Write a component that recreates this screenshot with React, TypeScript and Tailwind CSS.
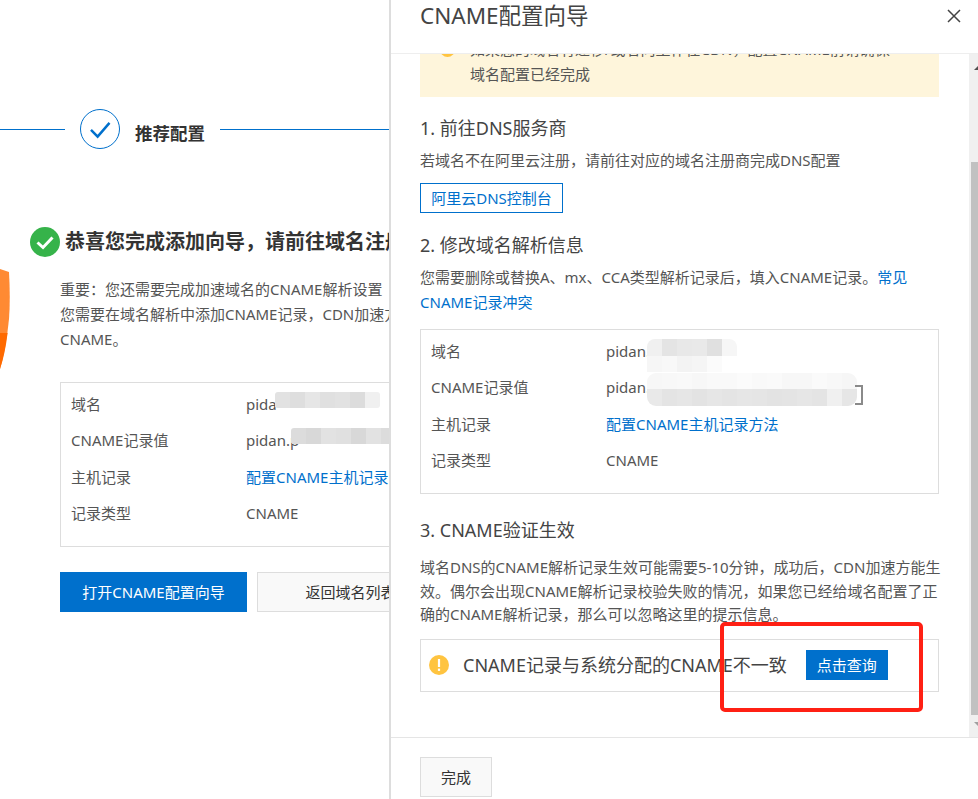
import React from "react";

const FONT = "font-['Noto_Sans','Noto_Sans_CJK_SC',sans-serif]";

function Cells({ cells, h = "h-[16px]" }: { cells: string[]; h?: string }) {
  return (
    <div className={`flex ${h}`}>
      {cells.map((c, i) => (
        <div key={i} className={`w-[15px] ${c}`} />
      ))}
    </div>
  );
}

function InfoRow({ label, children }: { label: string; children: React.ReactNode }) {
  return (
    <div className="relative flex h-[36.4px] items-center text-[15px] text-[#555]">
      <div className="w-[175px] shrink-0">{label}</div>
      <div className="relative whitespace-nowrap">{children}</div>
    </div>
  );
}

function Check({ className }: { className: string }) {
  return (
    <svg viewBox="0 0 40 40" className={className}>
      <path d="M10.5 21 L17.5 28 L30 13.5" fill="none" stroke="currentColor" strokeWidth="2.6" />
    </svg>
  );
}

function Left() {
  return (
    <div className="relative h-full w-[389px] shrink-0 overflow-hidden">
      <svg viewBox="0 0 12 102" className="absolute left-0 top-[269px] h-[102px] w-[12px]">
        <path d="M0 0 L9 3 Q10.5 30 9 50 Q6 80 0 100 Z" fill="#ff8a33" />
        <path d="M0 64 L7.6 64 Q5 85 0 100 Z" fill="#ff6a00" />
      </svg>
      <div className="mt-[109px] flex h-[40px] w-[389px] items-center">
        <div className="h-px w-[65px] bg-[#0070cc]" />
        <div className="ml-[15px] flex h-[40px] w-[40px] items-center justify-center rounded-full border border-[#0070cc] text-[#0070cc]">
          <Check className="h-[38px] w-[38px]" />
        </div>
        <div className="ml-[15px] mt-[8px] w-[85px] text-[17.5px] font-bold text-[#333]">推荐配置</div>
        <div className="h-px flex-1 bg-[#0070cc]" />
      </div>
      <div className="ml-[30px] mt-[78px] flex h-[30px] w-[700px] items-center">
        <svg viewBox="0 0 30 30" className="h-[30px] w-[30px] shrink-0">
          <circle cx="15" cy="15" r="15" fill="#36b34a" />
          <path d="M7.5 15.5 L13 20.5 L22.5 10.5" fill="none" stroke="#fff" strokeWidth="3" />
        </svg>
        <div className="ml-[5px] whitespace-nowrap text-[20px] font-bold text-[#333]">恭喜您完成添加向导，请前往域名注册商处完成解析</div>
      </div>
      <div className="ml-[60px] mt-[20px] w-[600px] text-[15px] leading-[25px] text-[#555]">
        <div className="whitespace-nowrap">重要：您还需要完成加速域名的CNAME解析设置</div>
        <div className="whitespace-nowrap">您需要在域名解析中添加CNAME记录，CDN加速方可生效，请确保域名解析到</div>
        <div>CNAME。</div>
      </div>
      <div className="ml-[60px] mt-[30px] h-[165px] w-[700px] border border-[#ddd] pl-[10px] pt-[3px]">
        <InfoRow label="域名">
          pida
          <div className="absolute left-[29px] top-[-1px] overflow-hidden rounded-[3px] bg-white">
            <Cells cells={["bg-[#e2e2e2]", "bg-[#dedede]", "bg-[#e6e6e6]", "bg-[#e0e0e0]", "bg-[#e2e2e2]", "bg-[#dcdcdc]", "bg-[#f0f0f0]"]} />
          </div>
        </InfoRow>
        <InfoRow label="CNAME记录值">
          pidan.p
          <div className="absolute left-[45px] top-[-1px] overflow-hidden rounded-[3px] bg-white">
            <Cells cells={["bg-[#dcdcdc]", "bg-[#d8d8d8]", "bg-[#e2e2e2]", "bg-[#e0e0e0]", "bg-[#d8d8d8]", "bg-[#e2e2e2]", "bg-[#dcdcdc]"]} />
          </div>
        </InfoRow>
        <InfoRow label="主机记录">
          <span className="text-[#0070cc]">配置CNAME主机记录方法</span>
        </InfoRow>
        <InfoRow label="记录类型">CNAME</InfoRow>
      </div>
      <div className="ml-[60px] mt-[25px] flex w-[700px] gap-[10px] text-[15px]">
        <div className="flex h-[40px] w-[187px] items-center justify-center bg-[#0070cc] text-white">打开CNAME配置向导</div>
        <div className="flex h-[40px] w-[187px] items-center justify-center border border-[#ddd] bg-[#f9f9f9] text-[#333]">返回域名列表</div>
      </div>
    </div>
  );
}

function Warn({ className }: { className: string }) {
  return (
    <svg viewBox="0 0 20 20" className={className}>
      <circle cx="10" cy="10" r="10" fill="#ffc440" />
      <rect x="8.9" y="4" width="2.2" height="8" fill="#fff" />
      <rect x="8.9" y="13.6" width="2.2" height="2.3" fill="#fff" />
    </svg>
  );
}

function Scrollbar() {
  return (
    <div className="relative h-full w-[9px] shrink-0 overflow-hidden bg-[#f0f0f0]">
      <svg viewBox="0 0 8 4" className="absolute left-[5px] top-[12px] h-[4px] w-[8px]">
        <path d="M0 4 L4 0 L8 4 Z" fill="#505050" />
      </svg>
      <div className="ml-[2px] mt-[108px] h-[553px] w-[7px] bg-[#c1c1c1]" />
      <svg viewBox="0 0 8 4" className="absolute left-[5px] top-[668px] h-[4px] w-[8px]">
        <path d="M0 0 L8 0 L4 4 Z" fill="#a0a0a0" />
      </svg>
    </div>
  );
}

function Drawer() {
  return (
    <div className="flex h-full w-[589px] shrink-0 flex-col border-l-2 border-[#ddd] bg-white">
      <div className="z-10 flex h-[54px] shrink-0 items-start justify-between border-b border-[#eee] bg-white pl-[29px] pr-[17px]">
        <div className="text-[22.5px] leading-[32px] text-[#444]">CNAME配置向导</div>
        <svg viewBox="0 0 14 14" className="mt-[9px] h-[14px] w-[14px]">
          <path d="M1 1 L13 13 M13 1 L1 13" stroke="#444" strokeWidth="1.5" />
        </svg>
      </div>
      <div className="flex min-h-0 flex-1">
        <div className="w-[578px] shrink-0 overflow-hidden pl-[29px] pr-[30px]">
          <div className="-mt-[27px] flex h-[70px] bg-[#fef5db] pb-[9px] pl-[20px] pr-[40px] pt-[10px] text-[15px] leading-[25px] text-[#555]">
            <Warn className="mr-[15px] mt-[5px] h-[15px] w-[15px] shrink-0" />
            <div>
              <div className="whitespace-nowrap">如果您的域名有迁移/或者向工作在CDN，配置CNAME前请确保</div>
              <div>域名配置已经完成</div>
            </div>
          </div>
          <div className="mt-[18px] text-[18px] leading-[26px] text-[#444]">1. 前往DNS服务商</div>
          <div className="mt-[7px] text-[15px] leading-[25px] text-[#555]">若域名不在阿里云注册，请前往对应的域名注册商完成DNS配置</div>
          <div className="mt-[10px] flex h-[30px] w-[143px] items-center justify-center border border-[#0070cc] text-[15px] text-[#0070cc]">阿里云DNS控制台</div>
          <div className="mt-[19px] text-[18px] leading-[26px] text-[#444]">2. 修改域名解析信息</div>
          <div className="mt-[7px] text-[15px] leading-[25px] text-[#555]">
            您需要删除或替换A、mx、CCA类型解析记录后，填入CNAME记录。<span className="text-[#0070cc]">常见CNAME记录冲突</span>
          </div>
          <div className="mt-[14px] h-[165px] border border-[#ddd] pl-[10px] pt-[3px]">
            <InfoRow label="域名">
              pidan.
              <div className="absolute left-[41px] top-[-1px] overflow-hidden rounded-t-[8px] bg-white">
                <Cells h="h-[17px]" cells={["bg-[#f0f0f0]", "bg-[#e4e4e4]", "bg-[#e8e8e8]", "bg-[#e9e9e9]", "bg-[#e0e0e0]", "bg-[#f6f6f6]"]} />
                <Cells cells={["bg-[#f6f6f6]", "bg-[#f8f8f8]", "bg-[#f3f3f3]", "bg-[#f5f5f5]", "bg-[#fbfbfb]", "bg-white"]} />
              </div>
            </InfoRow>
            <InfoRow label="CNAME记录值">
              pidan.
              <div className="absolute left-[41px] top-[-3px] flex">
                <div className="overflow-hidden rounded-[9px] bg-white">
                  <Cells cells={["bg-[#f7f7f7]", "bg-[#f8f8f8]", "bg-[#f9f9f9]", "bg-[#f7f7f7]", "bg-[#f9f9f9]", "bg-[#f9f9f9]", "bg-[#fbfbfb]", "bg-[#f9f9f9]", "bg-[#fafafa]", "bg-[#f7f7f7]", "bg-[#f7f7f7]", "bg-[#fafafa]", "bg-[#f8f8f8]", "bg-[#f6f6f6]"]} />
                  <Cells h="h-[17px]" cells={["bg-[#e9e9e9]", "bg-[#e4e4e4]", "bg-[#e6e6e6]", "bg-[#e3e3e3]", "bg-[#e6e6e6]", "bg-[#e4e4e4]", "bg-[#e6e6e6]", "bg-[#e5e5e5]", "bg-[#e3e3e3]", "bg-[#e4e4e4]", "bg-[#e6e6e6]", "bg-[#e4e4e4]", "bg-[#f0f0f0]", "bg-[#e6e6e6]"]} />
                </div>
                <svg viewBox="0 0 9 20" className="mt-[12px] -ml-[2px] h-[20px] w-[9px]">
                  <path d="M0 1 H7 V19 H0" fill="none" stroke="#8a8a8a" strokeWidth="2" />
                </svg>
              </div>
            </InfoRow>
            <InfoRow label="主机记录">
              <span className="text-[#0070cc]">配置CNAME主机记录方法</span>
            </InfoRow>
            <InfoRow label="记录类型">CNAME</InfoRow>
          </div>
          <div className="mt-[23px] text-[18px] leading-[26px] text-[#444]">3. CNAME验证生效</div>
          <div className="mt-[13px] text-[15px] leading-[23.6px] text-[#555]">
            <div className="whitespace-nowrap">域名DNS的CNAME解析记录生效可能需要5-10分钟，成功后，CDN加速方能生</div>
            <div className="whitespace-nowrap">效。偶尔会出现CNAME解析记录校验失败的情况，如果您已经给域名配置了正</div>
            <div className="whitespace-nowrap">确的CNAME解析记录，那么可以忽略这里的提示信息。</div>
          </div>
          <div className="mt-[12px] flex h-[53px] items-center border border-[#ddd] pl-[8px]">
            <Warn className="h-[20px] w-[20px] shrink-0" />
            <div className="ml-[14px] whitespace-nowrap text-[18px] text-[#444]">CNAME记录与系统分配的CNAME不一致</div>
            <div className="ml-[19px] flex h-[30px] w-[82px] items-center justify-center bg-[#0070cc] text-[15px] text-white">点击查询</div>
          </div>
        </div>
        <Scrollbar />
      </div>
      <div className="h-[62px] shrink-0 border-t border-[#e5e5e5] pl-[29px] pt-[19px]">
        <div className="flex h-[40px] w-[72px] items-center justify-center border border-[#ddd] bg-[#f9f9f9] text-[15px] text-[#333]">完成</div>
      </div>
    </div>
  );
}

export default function App() {
  return (
    <div className={`relative flex h-[799px] w-[978px] overflow-hidden bg-white ${FONT}`}>
      <Left />
      <Drawer />
      <div className="absolute left-[720px] top-[622px] h-[90px] w-[203px] rounded-[5px] border-[4px] border-[#ff2014]" />
    </div>
  );
}
